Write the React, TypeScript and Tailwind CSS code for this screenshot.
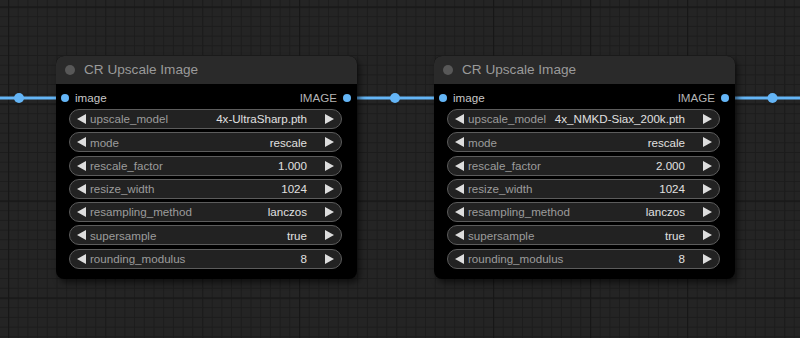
import React from "react";

type W = { label: string; value: string };

const node1: W[] = [
  { label: "upscale_model", value: "4x-UltraSharp.pth" },
  { label: "mode", value: "rescale" },
  { label: "rescale_factor", value: "1.000" },
  { label: "resize_width", value: "1024" },
  { label: "resampling_method", value: "lanczos" },
  { label: "supersample", value: "true" },
  { label: "rounding_modulus", value: "8" },
];

const node2: W[] = [
  { label: "upscale_model", value: "4x_NMKD-Siax_200k.pth" },
  { label: "mode", value: "rescale" },
  { label: "rescale_factor", value: "2.000" },
  { label: "resize_width", value: "1024" },
  { label: "resampling_method", value: "lanczos" },
  { label: "supersample", value: "true" },
  { label: "rounding_modulus", value: "8" },
];

function Tri({ dir }: { dir: "l" | "r" }) {
  return (
    <svg width="9" height="10" viewBox="0 0 9 10" className="shrink-0">
      {dir === "l" ? (
        <polygon points="9,0 9,10 0,5" fill="#dddddd" />
      ) : (
        <polygon points="0,0 0,10 9,5" fill="#dddddd" />
      )}
    </svg>
  );
}

function Widget({ w }: { w: W }) {
  return (
    <div className="ml-[13px] mr-[15px] flex h-[20px] items-center whitespace-nowrap rounded-full border border-[#5c5c5c] bg-[#222222] pl-[7px] pr-[7px] text-[11.6px] leading-none">
      <Tri dir="l" />
      <span className="ml-[4px] flex-1 text-[#9c9c9c]">{w.label}</span>
      <span className="text-[#e0e0e0]">{w.value}</span>
      <span className="ml-[18px] flex">
        <Tri dir="r" />
      </span>
    </div>
  );
}

function Node({ left, widgets }: { left: string; widgets: W[] }) {
  return (
    <div
      className={`absolute top-[56px] w-[301px] rounded-[8px] bg-black shadow-[3px_4px_6px_rgba(0,0,0,0.55)] ${left}`}
    >
      <div className="flex h-[28px] items-center rounded-t-[8px] bg-[#2a2a2a] pl-[9px]">
        <div className="h-[10px] w-[10px] rounded-full bg-[#585858]" />
        <span className="ml-[9px] whitespace-nowrap text-[13.6px] text-[#9a9a9a]">CR Upscale Image</span>
      </div>
      <div className="flex h-[24px] items-center pt-[4px] text-[11.6px] leading-none">
        <div className="ml-[5px] h-[8px] w-[8px] rounded-full bg-[#64b5f6]" />
        <span className="ml-[6px] flex-1 text-[#c8c8c8]">image</span>
        <span className="text-[#b4b4b4]">IMAGE</span>
        <div className="ml-[6px] mr-[6px] h-[8px] w-[8px] rounded-full bg-[#64b5f6]" />
      </div>
      <div className="mt-[1px] flex flex-col gap-[3.3px] pb-[10px]">
        {widgets.map((w) => (
          <Widget key={w.label} w={w} />
        ))}
      </div>
    </div>
  );
}

export default function App() {
  return (
    <div className="relative h-[338px] w-[800px] overflow-hidden bg-[#242424] font-['Liberation_Sans',Arial,sans-serif]">
      <svg className="absolute inset-0" width="800" height="338">
        <defs>
          <pattern id="minor" x="8" y="6.5" width="9.7" height="9.7" patternUnits="userSpaceOnUse">
            <path d="M0 0.5 H9.7 M0.5 0 V9.7" stroke="#1c1c1c" strokeWidth="1" fill="none" />
          </pattern>
          <pattern id="major" x="8" y="6.5" width="97" height="97" patternUnits="userSpaceOnUse">
            <path d="M0 0.5 H97 M0.5 0 V97" stroke="#171717" strokeWidth="1.5" fill="none" />
          </pattern>
        </defs>
        <rect width="800" height="338" fill="url(#minor)" />
        <rect width="800" height="338" fill="url(#major)" />
        <g stroke="#64b5f6" strokeWidth="3">
          <line x1="0" y1="98" x2="65" y2="98" />
          <line x1="347" y1="98" x2="443" y2="98" />
          <line x1="725" y1="98" x2="800" y2="98" />
        </g>
        <g fill="#64b5f6">
          <circle cx="19" cy="98" r="5" />
          <circle cx="395" cy="98" r="5" />
          <circle cx="772.5" cy="98" r="5" />
        </g>
      </svg>
      <Node left="left-[56px]" widgets={node1} />
      <Node left="left-[434px]" widgets={node2} />
    </div>
  );
}
